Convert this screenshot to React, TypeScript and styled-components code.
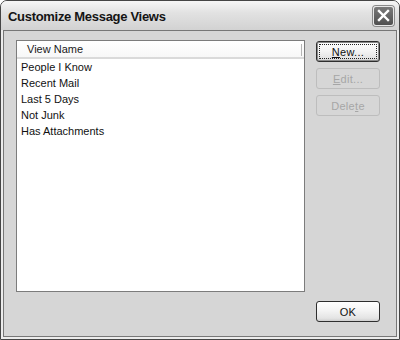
import React from "react";
import styled, { createGlobalStyle } from "styled-components";

const Global = createGlobalStyle`
  html, body { margin: 0; padding: 0; background: #ffffff; }
  #root { width: 400px; height: 340px; }
  * { box-sizing: border-box; }
`;

const Window = styled.div`
  width: 400px;
  height: 340px;
  display: flex;
  flex-direction: column;
  border: 1px solid #454545;
  border-radius: 7px 7px 0 0;
  overflow: hidden;
  background: #ececec;
  font-family: "Liberation Sans", Arial, sans-serif;
`;

const TitleBar = styled.div`
  height: 29px;
  flex: none;
  display: flex;
  align-items: center;
  justify-content: space-between;
  padding: 2px 5px 0 7px;
  background: linear-gradient(#f6f6f6, #e2e2e2 40%, #d2d2d2);
`;

const Title = styled.span`
  font-family: "Liberation Sans", Arial, sans-serif;
  font-weight: bold;
  font-size: 13px;
  color: #141414;
  letter-spacing: -0.3px;
`;

const CloseButton = styled.div`
  width: 21px;
  height: 20px;
  margin-top: -2px;
  border-radius: 3px;
  border: 1px solid #e8e8e8;
  box-shadow: 0 0 0 1px #8a8a8a;
  background: linear-gradient(#7a7a7a, #505050);
  display: flex;
  align-items: center;
  justify-content: center;
`;

const Frame = styled.div`
  flex: 1;
  display: flex;
  padding: 0 2px 2px 2px;
  background: #ececec;
`;

const Client = styled.div`
  flex: 1;
  border: 1px solid #777777;
  background: #d6d6d6;
  display: grid;
  grid-template-columns: 289px 64px;
  grid-template-rows: 1fr auto;
  column-gap: 11px;
  padding: 9px 16px 14px 12px;
`;

const ListBox = styled.div`
  grid-column: 1;
  grid-row: 1;
  border: 1px solid #7c7c7c;
  background: #ffffff;
  display: flex;
  flex-direction: column;
`;

const Header = styled.div`
  height: 18px;
  flex: none;
  display: flex;
  align-items: center;
  position: relative;
  background: linear-gradient(#ffffff, #f7f7f7);
  border-bottom: 2px solid #dadada;
  padding-left: 10px;
  font-size: 11px;
  color: #1a1a1a;
`;

const HeaderSep = styled.span`
  position: absolute;
  right: 2px;
  top: 3px;
  width: 1px;
  height: 12px;
  background: #b4b4b4;
`;

const Item = styled.div`
  height: 16px;
  line-height: 16px;
  padding-left: 4px;
  font-size: 11px;
  color: #111111;
`;

const ButtonColumn = styled.div`
  grid-column: 2;
  grid-row: 1;
  display: flex;
  flex-direction: column;
  gap: 6px;
  padding-top: 1px;
`;

const Button = styled.div<{ $disabled?: boolean; $default?: boolean }>`
  height: 21px;
  width: 64px;
  border-radius: 3px;
  position: relative;
  display: flex;
  align-items: center;
  justify-content: center;
  font-size: 11px;
  letter-spacing: 0.3px;
  color: ${(p) => (p.$disabled ? "#a6a6a6" : "#111111")};
  border: 1px solid ${(p) => (p.$disabled ? "#bdbdbd" : "#2e2e2e")};
  background: ${(p) =>
    p.$disabled
      ? "#d6d6d6"
      : "linear-gradient(#ffffff, #f4f4f4 45%, #e4e4e4 85%, #cfcfcf)"};
  box-shadow: ${(p) => (p.$default ? "inset 0 0 0 1px #8a8a8a" : "none")};
`;

const Focus = styled.span`
  position: absolute;
  inset: 2px;
  border: 1px dotted #222222;
  border-radius: 1px;
`;

const Key = styled.span`
  text-decoration: underline;
  text-underline-offset: 1px;
`;

const OkButton = styled(Button)`
  grid-column: 2;
  grid-row: 2;
  margin-top: 9px;
`;

const items = ["People I Know", "Recent Mail", "Last 5 Days", "Not Junk", "Has Attachments"];

export default function App() {
  return (
    <>
      <Global />
      <Window>
        <TitleBar>
          <Title>Customize Message Views</Title>
          <CloseButton>
            <svg width="13" height="13" viewBox="0 0 13 13">
              <path d="M2 2 L11 11 M11 2 L2 11" stroke="#ffffff" strokeWidth="2.4" strokeLinecap="square" />
            </svg>
          </CloseButton>
        </TitleBar>
        <Frame>
          <Client>
            <ListBox>
              <Header>
                View Name
                <HeaderSep />
              </Header>
              {items.map((t) => (
                <Item key={t}>{t}</Item>
              ))}
            </ListBox>
            <ButtonColumn>
              <Button $default>
                <Focus />
                <span>
                  <Key>N</Key>ew...
                </span>
              </Button>
              <Button $disabled>
                <span>
                  <Key>E</Key>dit...
                </span>
              </Button>
              <Button $disabled>
                <span>
                  Dele<Key>t</Key>e
                </span>
              </Button>
            </ButtonColumn>
            <OkButton>OK</OkButton>
          </Client>
        </Frame>
      </Window>
    </>
  );
}
